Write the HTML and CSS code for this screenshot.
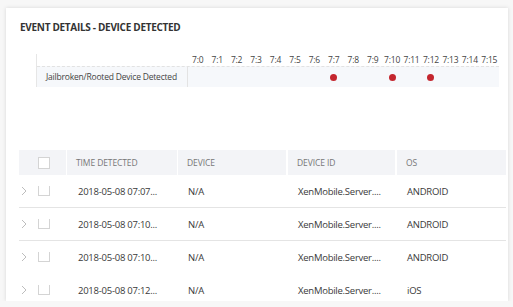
FILE: index.html
```html
<!DOCTYPE html>
<html lang="en">
<head>
    <meta charset="UTF-8">
    <meta name="viewport" content="width=device-width, initial-scale=1.0">
    <title>Event Details</title>
    <link rel="stylesheet" href="styles.css">
</head>
<body>
    <div class="card">
        <h1 class="title">EVENT DETAILS - DEVICE DETECTED</h1>

        <!-- timeline -->
        <div class="timeline">
            <div class="tl-axis">
                <span>7:0</span><span>7:1</span><span>7:2</span><span>7:3</span>
                <span>7:4</span><span>7:5</span><span>7:6</span><span>7:7</span>
                <span>7:8</span><span>7:9</span><span>7:10</span><span>7:11</span>
                <span>7:12</span><span>7:13</span><span>7:14</span><span>7:15</span>
            </div>
            <div class="tl-row">
                <div class="tl-label">Jailbroken/Rooted Device Detected</div>
                <div class="tl-track">
                    <span class="dot c7"></span>
                    <span class="dot c10"></span>
                    <span class="dot c12"></span>
                </div>
            </div>
        </div>

        <!-- events table -->
        <div class="table">
            <div class="thead">
                <div class="cell first"><span class="check"></span></div>
                <div class="cell">TIME DETECTED</div>
                <div class="cell">DEVICE</div>
                <div class="cell">DEVICE ID</div>
                <div class="cell">OS</div>
            </div>

            <div class="trow">
                <div class="cell first">
                    <svg class="chevron" width="6" height="10" viewBox="0 0 6 10"><polyline points="1,1 5,5 1,9" fill="none" stroke="#bdbdbd" stroke-width="1"/></svg>
                    <span class="check"></span>
                </div>
                <div class="cell time">2018-05-08 07:07...</div>
                <div class="cell">N/A</div>
                <div class="cell">XenMobile.Server....</div>
                <div class="cell">ANDROID</div>
            </div>
            <div class="trow">
                <div class="cell first">
                    <svg class="chevron" width="6" height="10" viewBox="0 0 6 10"><polyline points="1,1 5,5 1,9" fill="none" stroke="#bdbdbd" stroke-width="1"/></svg>
                    <span class="check"></span>
                </div>
                <div class="cell time">2018-05-08 07:10...</div>
                <div class="cell">N/A</div>
                <div class="cell">XenMobile.Server....</div>
                <div class="cell">ANDROID</div>
            </div>
            <div class="trow plain">
                <div class="cell first">
                    <svg class="chevron" width="6" height="10" viewBox="0 0 6 10"><polyline points="1,1 5,5 1,9" fill="none" stroke="#bdbdbd" stroke-width="1"/></svg>
                    <span class="check"></span>
                </div>
                <div class="cell time">2018-05-08 07:10...</div>
                <div class="cell">N/A</div>
                <div class="cell">XenMobile.Server....</div>
                <div class="cell">ANDROID</div>
            </div>
            <div class="trow plain">
                <div class="cell first">
                    <svg class="chevron" width="6" height="10" viewBox="0 0 6 10"><polyline points="1,1 5,5 1,9" fill="none" stroke="#bdbdbd" stroke-width="1"/></svg>
                    <span class="check"></span>
                </div>
                <div class="cell time">2018-05-08 07:12...</div>
                <div class="cell">N/A</div>
                <div class="cell">XenMobile.Server....</div>
                <div class="cell">iOS</div>
            </div>
        </div>
    </div>
</body>
</html>
```

FILE: styles.css
```css
* {
    margin: 0;
    padding: 0;
    box-sizing: border-box;
}

body {
    font-family: "Open Sans", Arial, sans-serif;
    background-color: #f7f7f7;
    color: #3a3a3a;
}

.card {
    margin: 8px 0 0 6px;
    width: 502px;
    height: 293px;
    padding: 12px 2px 0 13px;
    background-color: #fff;
    box-shadow: 0 0 4px rgba(0, 0, 0, 0.13);
    overflow: hidden;
}

.title {
    font-size: 10px;
    font-weight: 700;
    line-height: 14px;
    letter-spacing: -0.3px;
    color: #333;
    padding-left: 1px;
}

/* timeline */
.timeline {
    margin: 20px 0 0 17px;
    width: 463px;
    border-left: 1px solid #e6e6e6;
}

.tl-axis {
    display: grid;
    grid-template-columns: repeat(16, 1fr);
    margin-left: 151px;
    height: 12px;
    font-size: 8.5px;
    line-height: 12px;
    letter-spacing: -0.2px;
    color: #444;
    text-align: center;
}

.tl-row {
    display: flex;
    height: 21px;
    border-top: 1px dashed #e2e2e2;
    background-color: #f6f8fb;
}

.tl-label {
    width: 151px;
    border-right: 1px solid #e3e3e3;
    padding: 3px 0 0 9px;
    font-size: 8.5px;
    line-height: 14px;
    letter-spacing: -0.2px;
    color: #444;
}

.tl-track {
    flex: 1;
    display: grid;
    grid-template-columns: repeat(16, 1fr);
    padding-top: 7px;
}

.dot {
    width: 7px;
    height: 7px;
    border-radius: 50%;
    background-color: #c4262e;
    justify-self: center;
}

.c7 { grid-column: 8; }
.c10 { grid-column: 11; }
.c12 { grid-column: 13; }

/* table */
.table {
    margin-top: 63px;
    width: 487px;
}

.thead,
.trow {
    display: grid;
    grid-template-columns: 48px 111px 110px 109px 109px;
    align-items: center;
}

.thead {
    height: 25px;
}

.thead .cell {
    height: 25px;
    display: flex;
    align-items: center;
    background-color: #f3f4f7;
    border-right: 1px solid #fff;
    font-size: 8.5px;
    letter-spacing: -0.1px;
    color: #777;
    padding-left: 9px;
}

.thead .cell:nth-child(3),
.thead .cell:nth-child(4) {
    border-right-width: 2px;
}

.thead .cell:last-child {
    border-right: none;
}

.thead .cell.first {
    padding-left: 19px;
}

.trow {
    height: 33px;
    border-bottom: 1px solid #e4e4e4;
}

.trow.plain {
    border-bottom-color: transparent;
}

.trow .cell {
    font-size: 9.5px;
    letter-spacing: -0.25px;
    color: #3a3a3a;
    padding-left: 10px;
    white-space: nowrap;
    overflow: hidden;
}

.trow .cell.time {
    padding-left: 11px;
}

.trow .cell.first {
    display: flex;
    align-items: center;
    padding-left: 2px;
}

.chevron {
    display: block;
    margin-right: 11px;
}

.check {
    display: block;
    width: 12px;
    height: 12px;
    border: 1px solid #d4d4d4;
    background-color: #fff;
}

.trow .check {
    margin-top: -2px;
}
```
